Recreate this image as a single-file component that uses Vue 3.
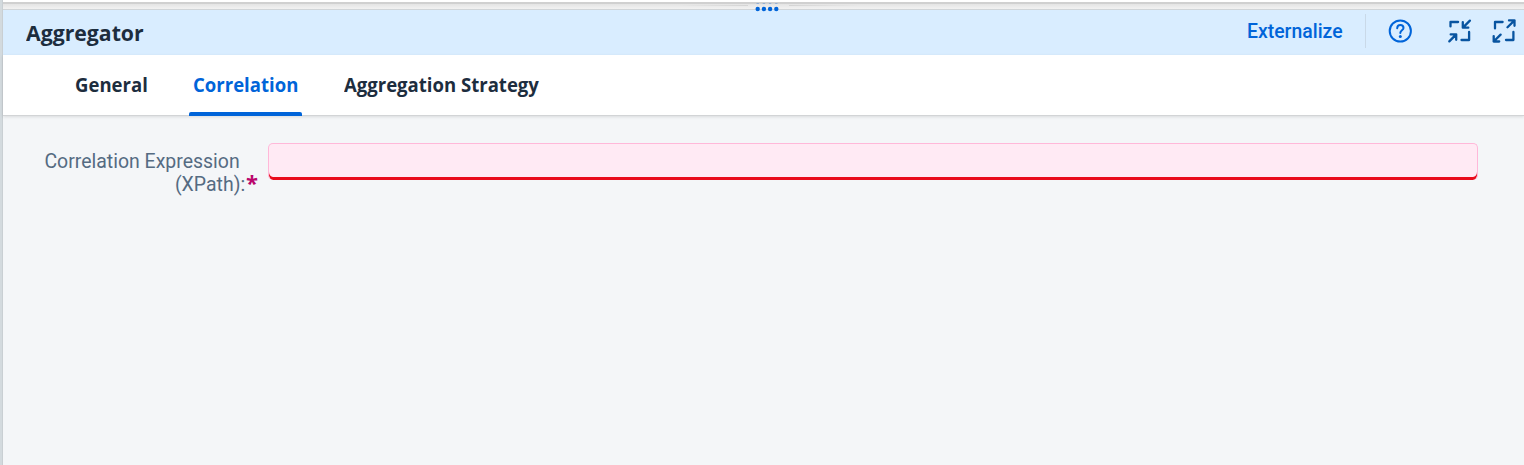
<script setup>
const tabs = [
  { name: 'General', key: 'general' },
  { name: 'Correlation', key: 'correlation', active: true },
  { name: 'Aggregation Strategy', key: 'strategy' },
]
</script>

<template>
  <div class="shell">
    <aside class="edge"></aside>
    <main class="panel">
      <div class="splitter">
        <i class="rule left"></i>
        <svg class="grip" width="24" height="10" viewBox="0 0 24 10">
          <g fill="#0064d9"><circle cx="2.7" cy="7" r="2.2" /><circle cx="8.9" cy="7" r="2.2" /><circle cx="15.1" cy="7" r="2.2" /><circle cx="21.3" cy="7" r="2.2" /></g>
          <path d="M1.5 1.5h2.4M7.7 1.5h2.4M13.9 1.5h2.4M20.1 1.5h2.4" stroke="#94afd3" />
        </svg>
        <i class="rule right"></i>
      </div>
      <header class="header">
        <h1><span class="title">Aggregator</span></h1>
        <div class="tools">
          <button class="externalize"><span>Externalize</span></button>
          <i class="divider"></i>
          <svg class="help" width="24" height="24" viewBox="0 0 24 24" fill="none" stroke="#0064d9" stroke-width="2" stroke-linecap="round">
            <circle cx="12.3" cy="12" r="10.6" />
            <path d="M9.2 9.2C9.3 7.2 10.5 6.1 12.3 6.1c1.9 0 3.2 1.1 3.2 2.8 0 2.3-3.2 2.5-3.2 5" />
            <circle cx="12.3" cy="17.6" r="1.5" fill="#0064d9" stroke="none" />
          </svg>
          <svg class="collapse" width="24" height="24" viewBox="0 0 24 24" fill="none" stroke="#0854a0" stroke-width="2.3" stroke-linecap="round" stroke-linejoin="round">
            <path d="M3.5 7.4V3h7.6M22.1 13v8H14.5M22.9 1.6l-7 7M15.8 3.2v5.5h5.5M2.3 22.4l6.9-7M3.7 15.4h5.5v5.4" />
          </svg>
          <svg class="expand" width="24" height="24" viewBox="0 0 24 24" fill="none" stroke="#0854a0" stroke-width="2.3" stroke-linecap="round" stroke-linejoin="round">
            <path d="M3 9.4V3h7.6M21.4 13v8H14M15.5 8.3l7-6.9M17 1.4h5.5v5.4M8.6 15.6l-6.9 6.9M1.7 17.1v5.4h5.5" />
          </svg>
        </div>
      </header>
      <nav class="tabs">
        <a v-for="tab in tabs" :key="tab.key" :class="['tab', tab.key, { active: tab.active }]"><span>{{ tab.name }}</span></a>
      </nav>
      <section class="form">
        <label for="expression">
          <span class="line first">Correlation Expression</span>
          <span class="second"><span class="line last">(XPath):</span><b>*</b></span>
        </label>
        <input id="expression" type="text" />
      </section>
    </main>
  </div>
</template>

<style>
body { overflow: hidden; }
</style>

<style scoped>
.shell { display: flex; width: 1524px; height: 465px; background: #f4f6f8; font-family: Roboto, "Open Sans", sans-serif; color: #1d2d3e; }
.edge { box-sizing: border-box; width: 3px; flex: none; background: #d3dade; border-right: 1px solid #c9cfd3; }
.panel { flex: 1; min-width: 0; display: flex; flex-direction: column; }
.splitter { box-sizing: border-box; height: 10px; flex: none; display: flex; justify-content: center; align-items: flex-start; padding-left: 10px; background: linear-gradient(#fff 0 2px, #d0d0d0 2px 4px, #e4e4e4 4px, #f2f2f2 9px, #d1d5d8 9px); }
.grip { margin: 2px 10px 0 7px; overflow: visible; z-index: 1; flex: none; }
.rule { height: 1px; width: 70px; margin-top: 3px; }
.left { background: linear-gradient(90deg, transparent, #d4d4d4); }
.right { background: linear-gradient(90deg, #d4d4d4, transparent); }
.rule { margin-top: 5px; }
.header { height: 45px; flex: none; display: flex; justify-content: space-between; align-items: center; background: #d9edff; }
h1 { margin: -2px 0 0 23px; font: 700 22px/30px "Open Sans", sans-serif; }
.title, .tab span, .externalize span, .line { display: inline-block; white-space: nowrap; }
.title { transform-origin: left; transform: scaleX(.965); }
.tools { display: flex; align-items: center; height: 45px; }
.externalize { border: 0; padding: 0; margin-right: 22px; width: 96px; background: none; color: #0064d9; font: 500 20px/30px Roboto, sans-serif; text-align: left; position: relative; top: -2px; }
.externalize span { transform-origin: left; transform: scaleX(.97); }
.divider { width: 1px; height: 34px; margin-top: -3px; background: #c9d9e8; }
.help { margin: -3px 35px 0 22px; }
.collapse { margin: -3px 21px 0 0; overflow: visible; }
.expand { margin: -3px 8px 0 0; }
.tabs { box-sizing: border-box; height: 61px; flex: none; display: flex; padding-left: 68px; background: #fff; border-bottom: 1px solid #d2d4d6; box-shadow: 0 1px 3px #0000001c; z-index: 1; }
.tab { box-sizing: border-box; height: 61px; padding: 15px 4px 0; font: 700 20px/30px "Open Sans", sans-serif; }
.tab span { transform-origin: left; transform: scaleX(.927); }
.general { width: 82px; margin-right: 36px; }
.correlation { width: 113px; margin-right: 38px; }
.active { color: #0064d9; background: linear-gradient(#0064d9, #0064d9) bottom / 100% 4px no-repeat; }
.active { display: flex; flex-direction: column; justify-content: space-between; background: none; align-items: flex-start; }
.active::after { content: ""; height: 4px; width: 113px; margin-left: -4px; border-radius: 2px 2px 0 0; background: #0064d9; }
.form { display: flex; padding: 27px 0 0 22px; }
label { width: 233px; margin: 7px 10px 0 0; display: flex; flex-direction: column; align-items: flex-end; font-size: 20px; line-height: 23px; color: #556b82; }
.line { transform-origin: right; transform: scaleX(.973); }
.first { margin-right: 18px; }
.second { display: flex; }
b { width: 12px; margin: -3px 0 0 1px; font: 700 22px/25px "Open Sans", sans-serif; color: #ba066c; }
input { box-sizing: border-box; width: 1210px; height: 37px; padding: 0 10px; outline: 0; border: 1px solid #ffb8d9; border-bottom: 0; border-radius: 5px; background: #ffeaf4; box-shadow: inset 0 -3px #e90b1b; }
</style>
